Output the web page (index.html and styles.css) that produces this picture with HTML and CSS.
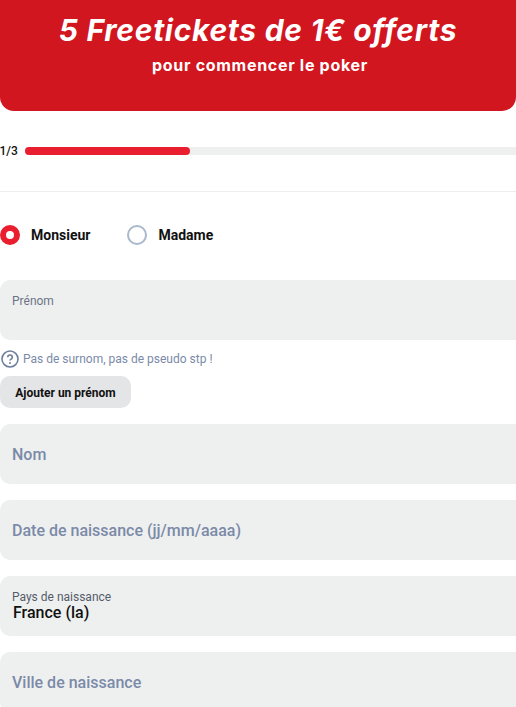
FILE: index.html
```html
<!DOCTYPE html>
<html lang="fr">
<head>
    <meta charset="UTF-8">
    <meta name="viewport" content="width=device-width, initial-scale=1.0">
    <title>Inscription</title>
    <link rel="stylesheet" href="styles.css">
</head>
<body>
    <div class="banner">
        <div class="banner-title">5 Freetickets de 1€ offerts</div>
        <div class="banner-sub">pour commencer le poker</div>
    </div>

    <div class="progress">
        <span class="progress-label">1/3</span>
        <div class="progress-track"><div class="progress-fill"></div></div>
    </div>

    <form class="form">
        <div class="gender">
            <label class="radio"><span class="radio-dot checked"></span>Monsieur</label>
            <label class="radio"><span class="radio-dot"></span>Madame</label>
        </div>

        <div class="field field-small">Prénom</div>
        <div class="hint">
            <svg class="hint-icon" width="18" height="18" viewBox="0 0 18 18"><circle cx="9" cy="9" r="8" fill="none" stroke="#6f7f9e" stroke-width="1.6"/><path d="M6.7 7.2a2.3 2.2 0 1 1 3.5 1.9c-.8.5-1.2.8-1.2 1.5" fill="none" stroke="#6f7f9e" stroke-width="1.7"/><circle cx="9" cy="13" r="1" fill="#6f7f9e"/></svg>
            Pas de surnom, pas de pseudo stp !
        </div>
        <button type="button" class="add-btn">Ajouter un prénom</button>

        <div class="field">Nom</div>
        <div class="field">Date de naissance (jj/mm/aaaa)</div>
        <div class="field field-filled">
            <span class="field-label">Pays de naissance</span>
            <span class="field-value">France (la)</span>
        </div>
        <div class="field">Ville de naissance</div>
    </form>
</body>
</html>
```

FILE: styles.css
```css
body {
    margin: 0;
    height: 707px;
    overflow: hidden;
    background: #fff;
    font-family: Roboto, sans-serif;
    color: #111;
}

.banner {
    height: 111px;
    box-sizing: border-box;
    padding-top: 11px;
    background: #d2161f;
    border-radius: 0 0 14px 14px;
    color: #fff;
    text-align: center;
}

.banner-title {
    font-family: Inter, sans-serif;
    font-size: 30px;
    font-weight: 700;
    font-style: italic;
    letter-spacing: 0.7px;
    line-height: 38px;
}

.banner-sub {
    margin-top: 6px;
    padding-left: 4px;
    font-family: Inter, sans-serif;
    font-size: 16px;
    font-weight: 700;
    letter-spacing: 0.7px;
    line-height: 20px;
}

.progress {
    display: flex;
    align-items: center;
    gap: 7.5px;
    height: 81px;
    box-sizing: border-box;
    border-bottom: 1px solid #eceeef;
    font-size: 12px;
    font-weight: 500;
}

.progress-label {
    margin-left: -0.5px;
}

.progress-track {
    flex: 1;
    height: 8px;
    background: #eeefef;
    border-radius: 4px 0 0 4px;
}

.progress-fill {
    width: 165px;
    height: 8px;
    background: #e91e2f;
    border-radius: 4px;
}

.gender {
    display: flex;
    gap: 37px;
    height: 88px;
    box-sizing: border-box;
    padding-bottom: 2px;
    align-items: center;
}

.radio {
    display: flex;
    align-items: center;
    gap: 11px;
    font-size: 14px;
    font-weight: 700;
}

.radio-dot {
    width: 16px;
    height: 16px;
    border: 2px solid #a9b8cb;
    border-radius: 50%;
}

.radio-dot.checked {
    width: 8px;
    height: 8px;
    border: 6px solid #e91e2f;
}

.field {
    display: flex;
    align-items: center;
    height: 60px;
    box-sizing: border-box;
    margin-bottom: 16px;
    padding: 0 12px;
    background: #eef0ef;
    border-radius: 10px 0 0 10px;
    color: #7b8aa8;
    font-size: 16px;
    font-weight: 500;
}

.field-small {
    align-items: flex-start;
    margin-bottom: 10px;
    padding-top: 14px;
    font-size: 12px;
    font-weight: 400;
    color: #6c7488;
}

.hint {
    display: flex;
    align-items: center;
    gap: 4px;
    margin-bottom: 8px;
    color: #7b8aa8;
    font-size: 12px;
}

.hint-icon {
    margin-left: 1px;
}

.add-btn {
    display: block;
    width: 131px;
    height: 32px;
    margin-bottom: 16px;
    padding: 2px 15px 0;
    border: none;
    border-radius: 10px;
    background: #e4e5e6;
    color: #111;
    font-family: Roboto, sans-serif;
    font-size: 12px;
    font-weight: 700;
    white-space: nowrap;
}

.field-filled {
    flex-direction: column;
    align-items: flex-start;
    justify-content: center;
    color: #111;
}

.field-label {
    font-size: 12px;
    font-weight: 400;
    color: #555c6a;
    line-height: 13px;
}

.field-value {
    margin-left: 1px;
    font-size: 16px;
    line-height: 18px;
}
```
